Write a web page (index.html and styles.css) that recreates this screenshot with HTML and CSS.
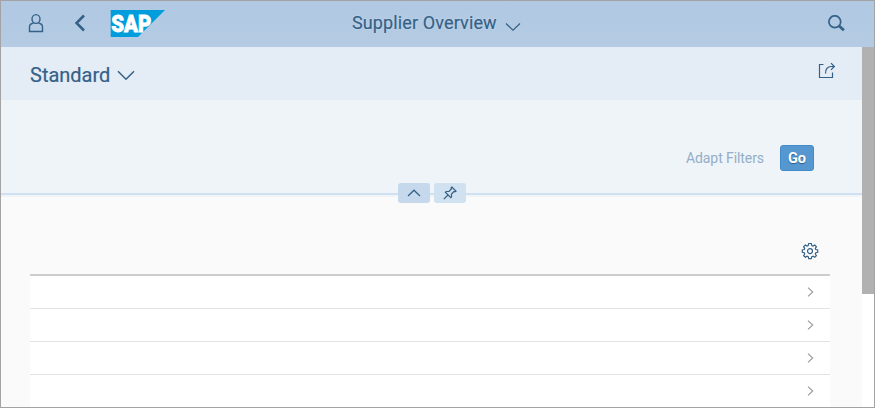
FILE: index.html
```html
<!DOCTYPE html>
<html lang="en">
<head>
<meta charset="utf-8">
<title>Supplier Overview</title>
<link rel="stylesheet" href="styles.css">
</head>
<body>
<div class="window">
  <header class="shell">
    <div class="shell-left">
      <svg class="icon user" width="16" height="20" viewBox="0 0 16 20"><ellipse cx="8" cy="6" rx="4" ry="4.4"/><path d="M5.6 10C2.5 10.6 1.5 11.7 1.5 14V18.5H14.5V14C14.5 11.7 13.5 10.6 10.4 10"/></svg>
      <svg class="icon back" width="12" height="18" viewBox="0 0 12 18"><path d="M10 1.5 2.5 9 10 16.5"/></svg>
      <svg class="logo" width="55" height="27" viewBox="0 0 55 27"><path d="M.7 0H55L28 27H.7Z" fill="#009ddc"/><text x="1.2" y="21.8" textLength="40" lengthAdjust="spacingAndGlyphs">SAP</text></svg>
    </div>
    <div class="shell-title"><span class="title">Supplier Overview</span>
      <svg class="icon" width="16" height="10" viewBox="0 0 16 10"><path d="M1 1.5 8 8.2 15 1.5"/></svg>
    </div>
    <svg class="icon search" width="18" height="18" viewBox="0 0 18 18"><circle cx="6.8" cy="6.7" r="5.9"/><path d="m11.2 11 4.7 4.2" stroke-width="2.8"/></svg>
  </header>
  <div class="body">
    <main class="page">
      <div class="variant">
        <span class="variant-name">Standard</span>
        <svg class="icon variant-arrow" width="18" height="11" viewBox="0 0 18 11"><path d="M1 1.2 9 9.2 17 1.2"/></svg>
        <svg class="icon share" width="17" height="17" viewBox="0 0 17 17"><path d="M5.5 2.5H1.5V15.5H14.5V10.5M7.5 11.5C7.5 7 9.5 4.5 13 4.5H16M13 1.2 16.3 4.5 13 7.8"/></svg>
      </div>
      <div class="filters">
        <span class="adapt">Adapt Filters</span>
        <button class="go">Go</button>
        <div class="toggles">
          <span class="toggle collapse"><svg class="icon" width="14" height="8" viewBox="0 0 14 8"><path d="M1 7 7 1.2 13 7"/></svg></span>
          <span class="toggle"><svg class="icon" width="14" height="14" viewBox="0 0 14 14"><path d="M8.8 1 13 5.1 11.8 5.8 11 5.5 8.5 8.1V11L7.8 11.7 2.4 6.2 3.2 5.5H6L8.4 3 8 1.8ZM5 9 .8 13.2"/></svg></span>
        </div>
      </div>
      <div class="content">
        <div class="toolbar">
          <svg class="icon" width="18" height="18" viewBox="0 0 18 18"><path d="M7.7 1.5H10.3L10.8 3.6 12 4.1 13.8 3 15.4 4.7 14.3 6.3 14.8 7.6 16.7 8V10.3L14.8 10.7 14.3 12 15.4 13.7 13.8 15.3 12.1 14.2 10.8 14.7 10.3 16.6H7.7L7.2 14.7 6 14.2 4.3 15.3 2.6 13.7 3.7 12 3.2 10.7 1.3 10.3V8L3.2 7.6 3.7 6.3 2.6 4.7 4.3 3 6 4.1 7.2 3.6Z"/><circle cx="9" cy="9.1" r="2.5"/></svg>
        </div>
        <div class="table">
          <div class="row"><svg class="nav" width="8" height="10" viewBox="0 0 8 10"><path d="M2 .7 6.7 5 2 9.3"/></svg></div>
          <div class="row"><svg class="nav" width="8" height="10" viewBox="0 0 8 10"><path d="M2 .7 6.7 5 2 9.3"/></svg></div>
          <div class="row"><svg class="nav" width="8" height="10" viewBox="0 0 8 10"><path d="M2 .7 6.7 5 2 9.3"/></svg></div>
          <div class="row"><svg class="nav" width="8" height="10" viewBox="0 0 8 10"><path d="M2 .7 6.7 5 2 9.3"/></svg></div>
        </div>
      </div>
    </main>
    <div class="scrollbar"><div class="thumb"></div></div>
  </div>
</div>
</body>
</html>
```
FILE: styles.css
```css
* { box-sizing: border-box; }
body { margin: 0; font-family: Roboto, "Liberation Sans", sans-serif; color: #346187; }
.window { width: 875px; height: 408px; border: 1px solid #a3a3a3; display: flex; flex-direction: column; overflow: hidden; }
.icon { display: block; flex: none; fill: none; stroke: #346187; stroke-width: 1.2; }
.shell { height: 46px; flex: none; display: grid; grid-template-columns: 351px 1fr auto; background: linear-gradient(#b0c8e2, #b4cbe3); }
.shell-left { display: flex; align-items: flex-start; padding: 9px 0 0 27px; }
.user { margin-top: 3px; stroke-width: 1.4; }
.back { margin: 4px 0 0 30px; stroke-width: 2.5; }
.logo { display: block; margin-left: 24px; }
.logo text { font: 900 23px Roboto, sans-serif; fill: #fff; stroke: #fff; stroke-width: .8px; }
.shell-title { display: flex; align-items: center; gap: 8px; }
.shell-title .icon { margin-top: 6px; }
.title { font-size: 18px; line-height: 44px; height: 46px; letter-spacing: .12px; text-shadow: 0 0 2px #d3e3f2; -webkit-text-stroke: .2px #346187; }
.search { margin: 14px 28px 0 0; stroke-width: 1.7; }
.body { flex: 1; min-height: 0; display: flex; }
.page { width: 861px; display: flex; flex-direction: column; background: #fafafa; }
.variant { height: 53px; flex: none; display: flex; align-items: center; padding: 0 27px 0 29px; background: #e4ecf6; }
.variant-name { font-size: 20px; line-height: 24px; margin-top: 3px; -webkit-text-stroke: .2px #346187; }
.variant-arrow { margin: 4px 0 0 7px; stroke-width: 1.5; }
.share { margin: -6px 0 0 auto; }
.filters { position: relative; height: 97px; flex: none; display: flex; justify-content: flex-end; align-items: flex-start; gap: 16px; padding: 45px 48px 0 0; background: linear-gradient(#eef4f8 93px, #cfe0f0 93px, #cfe0f0 95px, #eef4f8 95px); }
.adapt { font-size: 14px; line-height: 26px; letter-spacing: -.08px; color: #94aec7; }
.go { width: 34px; height: 26px; padding: 0; border: 1px solid #428bca; border-radius: 3px; background: #5697d0; color: #fff; font: 700 14.5px Roboto, sans-serif; text-shadow: 0 1px 1px #285d8c; }
.toggles { position: absolute; left: 397px; top: 83px; display: flex; gap: 4px; }
.toggle { width: 32px; height: 20px; border-radius: 3px; background: #d0e1f0; display: flex; align-items: center; justify-content: center; }
.collapse { background: #c6d8eb; }
.content { padding: 0 32px 0 29px; }
.toolbar { height: 77px; display: flex; justify-content: flex-end; padding: 45px 11px 0 0; }
.table { border-top: 2px solid #cdcdcd; background: #fff; }
.row { height: 33px; border-bottom: 1px solid #e3e3e3; display: flex; align-items: center; justify-content: flex-end; padding-right: 16px; }
.nav { fill: none; stroke: #999; stroke-width: 1.1; }
.scrollbar { width: 12px; background: #fff; }
.thumb { height: 247px; background: #b1b1b1; }
```
